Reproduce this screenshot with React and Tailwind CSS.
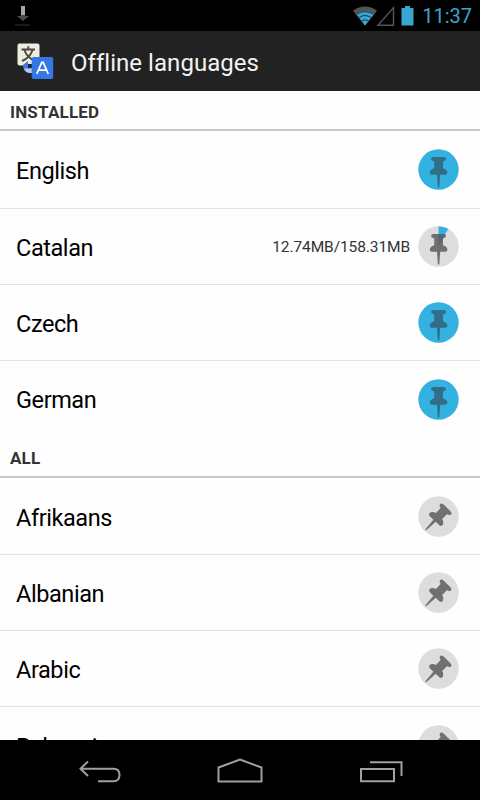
const installed = [
  { name: "English", progress: 1 },
  { name: "Catalan", progress: 0.08, status: "12.74MB/158.31MB" },
  { name: "Czech", progress: 1 },
  { name: "German", progress: 1 },
];

const all = [{ name: "Afrikaans" }, { name: "Albanian" }, { name: "Arabic" }, { name: "Belarusian" }];

function PinShape() {
  return (
    <path d="M-5-12.6Q-7.4-12.6-7.4-10.6T-4.9-8.4L-4.3-7.5V-1.2C-7-.2-8.7 1.2-8.7 3.1Q-8.7 5.3-6.5 5.3H-1.5L-.6 18H.8L1.7 5.3H6.7Q8.9 5.3 8.9 3.1C8.9 1.2 7.2-.2 4.5-1.2V-7.5L5.1-8.4Q7.5-8.6 7.5-10.6T5.2-12.6Z" />
  );
}

function PinButton({ progress }) {
  const angle = (progress || 0) * 2 * Math.PI;
  const full = progress === 1;
  return (
    <svg viewBox="-20.5 -20.5 41 41" className="h-[41px] w-[41px] shrink-0">
      <circle r="20.2" className={full ? "fill-[#33b1e1]" : "fill-[#dddddd]"} />
      {progress > 0 && !full && (
        <path d={`M0 0V-20.2A20.2 20.2 0 0 1 ${20.2 * Math.sin(angle)} ${-20.2 * Math.cos(angle)}Z`} className="fill-[#33b1e1]" />
      )}
      <g className={full ? "fill-[#316f88]" : "fill-[#555555]/80"} transform={progress ? undefined : "rotate(44) translate(0 .5)"}>
        <PinShape />
      </g>
    </svg>
  );
}

function SectionHeader({ children }) {
  return (
    <h2 className="flex h-[40.4px] shrink-0 items-center border-b-2 border-[#c8c8c8] pl-2.5 pt-[5px] text-[17px] font-bold tracking-[0.2px] text-[#333333]">
      {children}
    </h2>
  );
}

function LanguageList({ items }) {
  return (
    <ul className="shrink-0 divide-y divide-[#e3e3e3] pt-px">
      {items.map((item) => (
        <li key={item.name} className="flex h-[76.2px] items-center pl-4 pr-[21px]">
          <span className="grow pt-1 text-[23.5px] tracking-[-0.42px] text-black">{item.name}</span>
          {item.status && <span className="mr-2 pt-0.5 text-[15.5px] tracking-[-0.1px] text-[#333333]">{item.status}</span>}
          <PinButton progress={item.progress} />
        </li>
      ))}
    </ul>
  );
}

function StatusBar() {
  return (
    <div className="flex h-[31px] shrink-0 items-center bg-black pl-[15px] pr-2">
      <svg viewBox="0 0 16 22" className="h-[22px] w-4">
        <path d="M6 1h4v9H6z" fill="#a8a8a8" />
        <path d="M6 10h4v1h4l-6 5-6-5h4z" fill="#4a4a4a" />
        <path d="M0 20h15" stroke="#333" />
      </svg>
      <svg viewBox="0 0 68 22" className="ml-auto h-[22px] w-[68px] translate-x-[2px]">
        <path d="M0 5.7Q12-2.7 24 5.7L12 20.5Z" fill="#555" />
        <path d="M3.3 9Q12 3.2 21 9L12 20.5Z" fill="#3aa5cf" />
        <path d="M3.5 9.2Q12 4 20.5 9.2M6 12.5Q12 8.5 18 12.5M8.5 16Q12 13.5 15.5 16" fill="none" stroke="#133b4b" />
        <path d="M25 20.3H40.5V2.5Z" fill="none" stroke="#555" strokeWidth="1.4" />
        <path d="M48.5 3H52V1H57V3H60.5V20.5H48.5Z" fill="#3aa5cf" />
      </svg>
      <span className="ml-[3px] text-[20px] leading-none text-[#3aa5cf]">11:37</span>
    </div>
  );
}

function TranslateLogo() {
  return (
    <svg viewBox="0 0 38 38" className="h-[38px] w-[38px]">
      <rect x=".5" y="1.5" width="22" height="22" rx="2" fill="#eeece0" />
      <path d="M11.3 4.2V7M4.5 7.5H18M15.5 8C14 13 10 17 5 19M7.5 8C9 13 13 17 18 18.5" fill="none" stroke="#4b493f" strokeWidth="1.9" />
      <path d="M6 23 11 19V23L12 26H17V31H12C8 30 6 27 6 23Z" fill="#3e78df" />
      <path d="M11 22H16V26H11Z" fill="#15233f" />
      <path d="M7 26.5H16V31H12Q8 30 7 26.5Z" fill="#b4c8f4" />
      <rect x="14.7" y="15" width="21.5" height="22" rx="2" fill="#3478e5" />
      <path d="M19.7 32 24.8 20.5H26.2L31.3 32M21.5 28.2H29.5" fill="none" stroke="#fff" strokeWidth="1.8" />
    </svg>
  );
}

function NavBar() {
  return (
    <nav className="flex h-[60px] shrink-0 items-center bg-black">
      <svg viewBox="0 0 480 60" className="h-full w-full" fill="none" stroke="#a0a0a0" strokeWidth="2">
        <path d="M88 21.5 80.5 28.7 88 36M81 28.7H113.5Q119.5 28.7 119.5 35T113.5 41.3H98" />
        <path d="M218.5 41.5V27.5L240 19.5 261.5 27.5V41.5Z" />
        <path d="M361 29H394V41.3H361ZM370 22.3H401.5V36" />
      </svg>
    </nav>
  );
}

export default function App() {
  return (
    <div className="flex h-[800px] w-[480px] flex-col overflow-hidden bg-white font-[Roboto,sans-serif]">
      <StatusBar />
      <header className="flex h-[60px] shrink-0 items-center bg-[#222222] pl-[17px]">
        <TranslateLogo />
        <h1 className="ml-4 pt-[3px] text-[24px] tracking-[0.04px] text-[#f3f3f3]">Offline languages</h1>
      </header>
      <main className="flex min-h-0 grow flex-col overflow-hidden bg-[#fefefe]">
        <SectionHeader>INSTALLED</SectionHeader>
        <LanguageList items={installed} />
        <SectionHeader>ALL</SectionHeader>
        <LanguageList items={all} />
      </main>
      <NavBar />
    </div>
  );
}
